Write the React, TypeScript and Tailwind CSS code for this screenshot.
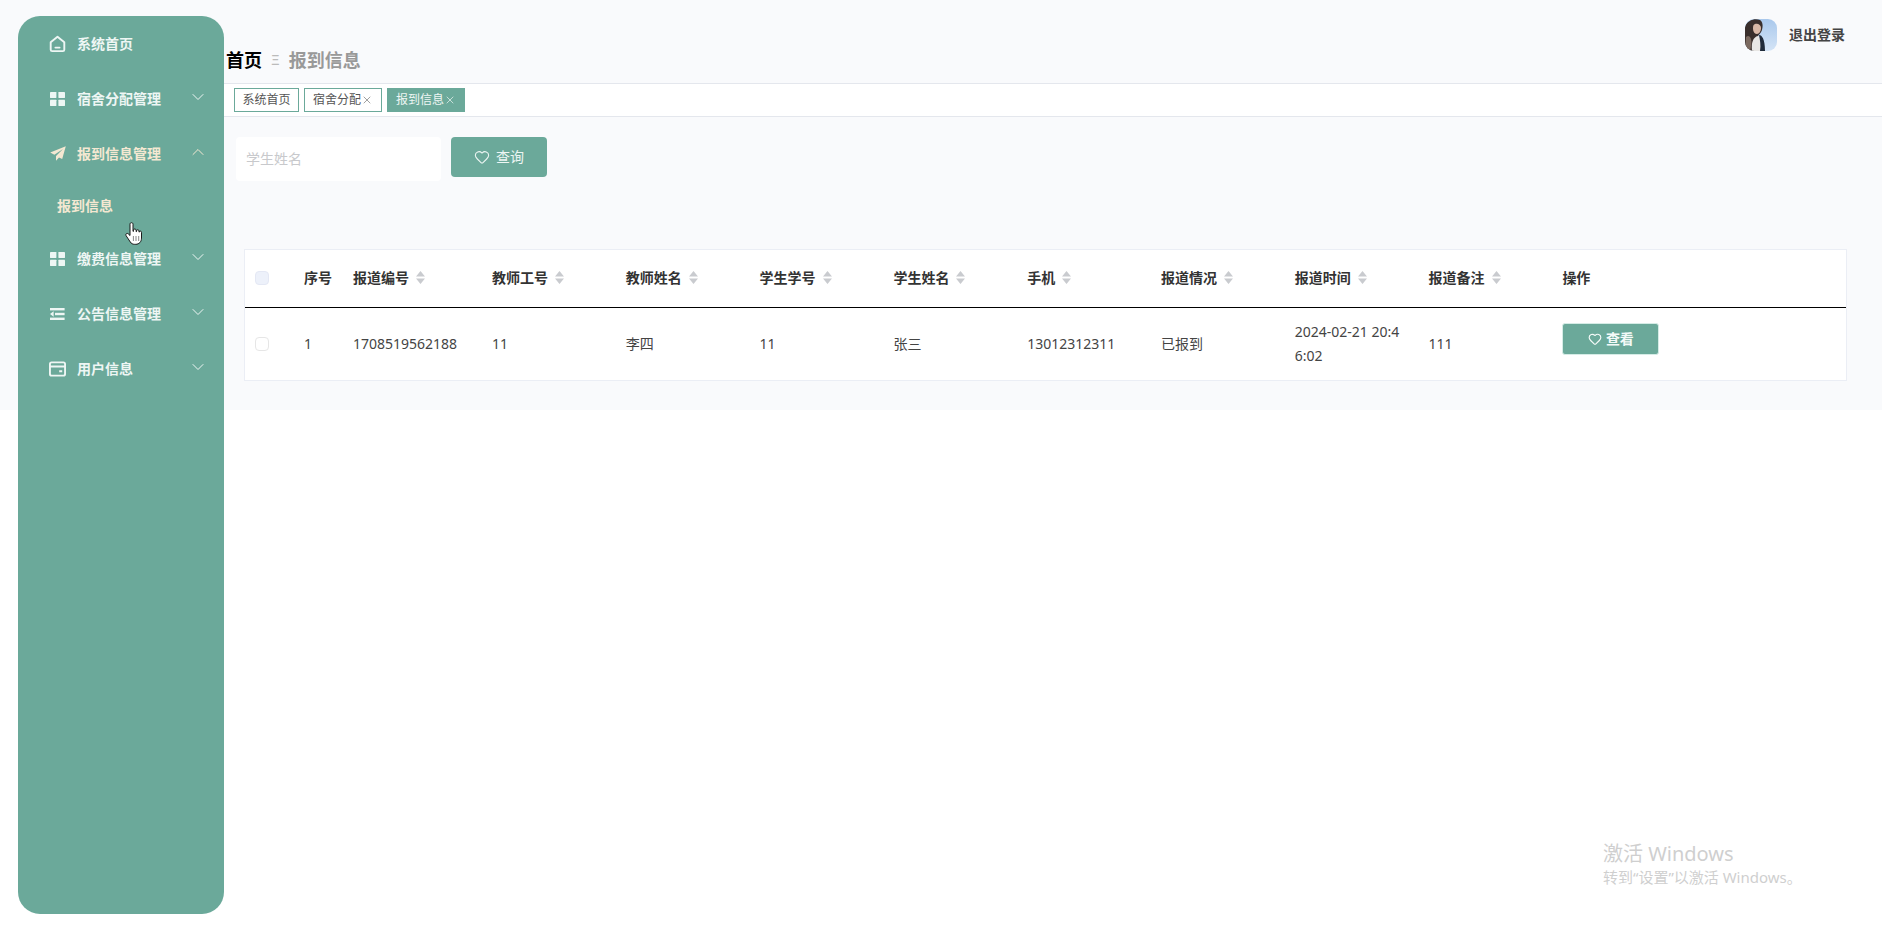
import { ChevronDown, ChevronUp, Heart, X } from "lucide-react";
import { FC, ReactNode } from "react";

const HomeIcon = () => (
  <svg width="18" height="18" viewBox="0 0 18 18" fill="none" stroke="currentColor" strokeWidth="2">
    <path d="M1.800 7.200 9 1.400l7.200 5.800V15a1.600 1.600 0 0 1-1.600 1.600H3.400A1.600 1.600 0 0 1 1.800 15z" strokeLinejoin="round" />
    <path d="M6.800 12.800h4.400" strokeLinecap="round" />
  </svg>
);

const GridIcon = () => (
  <svg width="15" height="14" viewBox="0 0 15 14" fill="currentColor">
    <rect x="0" y="0" width="6.400" height="6" rx=".4" />
    <rect x="8.400" y="0" width="6.600" height="6" rx=".4" />
    <rect x="0" y="7.800" width="6.400" height="6.200" rx=".4" />
    <rect x="8.400" y="7.800" width="6.600" height="6.200" rx=".4" />
  </svg>
);

const PlaneIcon = () => (
  <svg width="16" height="15" viewBox="0 0 16 15" fill="currentColor">
    <path d="M15.800.2.200 6.600l4.200 2.200L13 3 6 10v4.800l3-3.400 3.200 1.600z" />
  </svg>
);

const ListIcon = () => (
  <svg width="15" height="12" viewBox="0 0 15 12" fill="currentColor">
    <rect x="0" y="0" width="14.600" height="2.400" />
    <rect x="5" y="4.800" width="9.600" height="2.400" />
    <rect x="0" y="9.600" width="14.600" height="2.400" />
    <path d="M3.600 3.200v5.600L0 6z" />
  </svg>
);

const WalletIcon = () => (
  <svg width="18" height="16" viewBox="0 0 18 16" fill="none" stroke="currentColor" strokeWidth="2">
    <rect x="1" y="1" width="16" height="14" rx="1.800" />
    <path d="M1 5.400h16M10.800 10.400H14" />
  </svg>
);

const HandCursor = () => (
  <svg width="18" height="24" viewBox="0 0 18 24" className="absolute left-[125px] top-[222px]">
    <path
      d="M5 2.200c0-2 3-2 3 0v7.200l.5-.1V8.200c0-1.700 2.600-1.700 2.600 0v1.400h.4v-.7c0-1.600 2.500-1.600 2.500 0v1.200h.3c0-1.300 2.200-1.300 2.200.2v5.800c0 3.700-2.400 6.200-5.700 6.200H9.500c-2 0-3.200-.8-4.200-2.300L1.100 13.700c-1-1.600 1-3.100 2.200-1.800L5 13.500z"
      fill="#fff"
      stroke="#1a1a1a"
      strokeWidth="1"
      strokeLinejoin="round"
    />
    <path d="M8.400 14v5M11 14v5M13.700 14v5" stroke="#555" strokeWidth=".7" />
  </svg>
);

const Avatar = () => (
  <svg width="32" height="32" viewBox="0 0 32 32" className="rounded-[9px]">
    <defs>
      <linearGradient id="sky" x1="0" y1="0" x2="0" y2="1">
        <stop offset="0" stopColor="#a9c8ec" />
        <stop offset="1" stopColor="#d4e4f6" />
      </linearGradient>
    </defs>
    <rect width="32" height="32" fill="url(#sky)" />
    <path d="M0 32V8C2 1 10-1 15 1c3 2 3 6 2 10-1 3-3 4-4 6l1 15z" fill="#3a2f2c" />
    <path d="M10 5c3-1 6 1 6 4s-2 6-4 6-4-2-4-5 0-4 2-5z" fill="#d9b8a6" />
    <path d="M7 32c-1-8 1-14 6-15 3 1 4 7 3 15z" fill="#e8e6e4" />
    <path d="M14 16c3 0 6 4 6 16h-5c1-6 0-11-1-16z" fill="#1f2a3a" />
    <path d="M1 18c2-2 4-1 5 2s0 8-1 12H0z" fill="#7c6a60" />
  </svg>
);

const SortCaret = () => (
  <svg width="9" height="13" viewBox="0 0 9 13" fill="#c9cbcf">
    <path d="M4.500 0 9 5.400H0zM4.500 13 9 7.600H0z" />
  </svg>
);

type MenuItem = { label: string; icon: ReactNode; arrow?: "down" | "up"; active?: boolean };

const menuTop: MenuItem[] = [
  { label: "系统首页", icon: <HomeIcon /> },
  { label: "宿舍分配管理", icon: <GridIcon />, arrow: "down" },
  { label: "报到信息管理", icon: <PlaneIcon />, arrow: "up", active: true },
];

const menuBottom: MenuItem[] = [
  { label: "缴费信息管理", icon: <GridIcon />, arrow: "down" },
  { label: "公告信息管理", icon: <ListIcon />, arrow: "down" },
  { label: "用户信息", icon: <WalletIcon />, arrow: "down" },
];

const MenuRow: FC<{ item: MenuItem }> = ({ item }) => (
  <div className={`flex h-[55px] items-center pl-[31px] pr-4 ${item.active ? "text-[#f4e8d2]" : "text-[#eef6f4]"}`}>
    <span className="flex w-[17px] justify-center">{item.icon}</span>
    <span className="ml-[11px] text-sm font-bold">{item.label}</span>
    {item.arrow === "down" && <ChevronDown size={20} strokeWidth={1.2} className="mb-[3px] ml-auto" />}
    {item.arrow === "up" && <ChevronUp size={20} strokeWidth={1.2} className="mb-[3px] ml-auto" />}
  </div>
);

const columns = [
  { label: "序号" },
  { label: "报道编号", sort: true },
  { label: "教师工号", sort: true },
  { label: "教师姓名", sort: true },
  { label: "学生学号", sort: true },
  { label: "学生姓名", sort: true },
  { label: "手机", sort: true },
  { label: "报道情况", sort: true },
  { label: "报道时间", sort: true },
  { label: "报道备注", sort: true },
  { label: "操作" },
];

const row = ["1", "1708519562188", "11", "李四", "11", "张三", "13012312311", "已报到", "2024-02-21 20:46:02", "111"];

const gridCols = "grid grid-cols-[49px_49px_139px_repeat(8,133.8px)_1fr]";

const App: FC = () => {
  return (
    <div className="relative flex h-[931px] items-start overflow-hidden bg-[linear-gradient(#f9fafc_410px,#fff_410px)] font-['Noto_Sans','Noto_Sans_CJK_SC',sans-serif]">
      <aside className="ml-[18px] mt-4 h-[898px] w-[206px] shrink-0 rounded-[22px] bg-[#6ba99a]">
        {menuTop.map((item) => (
          <MenuRow key={item.label} item={item} />
        ))}
        <div className="flex h-[50px] items-center pl-[39px] text-sm font-bold text-[#f4e8d2]">报到信息</div>
        {menuBottom.map((item) => (
          <MenuRow key={item.label} item={item} />
        ))}
      </aside>

      <main className="min-w-0 flex-1">
        <header className="flex h-[83px] justify-between pl-[2px] pr-[37px]">
          <div className="flex items-center self-end pb-[9px] leading-6">
            <span className="text-lg font-bold text-black">首页</span>
            <span className="ml-[9px] text-sm text-[#bbb]">Ξ</span>
            <span className="ml-[9px] text-lg font-bold text-[#999]">报到信息</span>
          </div>
          <div className="mt-[19px] flex h-8 items-center gap-3">
            <Avatar />
            <span className="text-sm font-bold text-[#444]">退出登录</span>
          </div>
        </header>

        <div className="flex h-[34px] items-center gap-[5px] border-y border-[#e4e7ed] bg-white pl-[10px] text-xs text-[#555]">
          <div className="flex h-6 items-center border border-[#6ba99a] px-[7.5px]">系统首页</div>
          <div className="flex h-6 items-center border border-[#6ba99a] px-2">
            宿舍分配
            <X size={12} strokeWidth={1.4} className="text-[#777]" />
          </div>
          <div className="flex h-6 items-center border border-[#6ba99a] bg-[#6ba99a] px-2 text-[#eef6f4]">
            报到信息
            <X size={12} strokeWidth={1.4} />
          </div>
        </div>

        <div className="ml-3 mt-5 flex items-start">
          <input
            placeholder="学生姓名"
            className="h-11 w-[205px] rounded bg-white pb-[2px] pl-[10px] text-sm outline-none placeholder:text-[#c8c9cc]"
          />
          <button className="ml-[10px] flex h-10 w-24 items-center justify-center gap-[6px] rounded bg-[#6ba99a] pb-[1px] text-sm text-[#eef6f4]">
            <Heart size={16} strokeWidth={1.6} />
            查询
          </button>
        </div>

        <div className="ml-5 mt-[68px] w-[1603px] border border-[#ebeef5] bg-white text-sm">
          <div className={`${gridCols} h-[58px] items-center border-b border-black pb-[2px] font-bold text-[#333]`}>
            <div className="pl-[10px]">
              <div className="h-[14px] w-[14px] rounded-sm border border-[#e4e8f4] bg-[#edf1fa]" />
            </div>
            {columns.map((col) => (
              <div key={col.label} className="flex items-center gap-[7px] pl-[10px]">
                {col.label}
                {col.sort && <SortCaret />}
              </div>
            ))}
          </div>
          <div className={`${gridCols} h-[72px] items-center pb-[1px] leading-6 text-[#444]`}>
            <div className="pl-[10px]">
              <div className="h-[14px] w-[14px] rounded-sm border border-[#e6e6e6] bg-white" />
            </div>
            {row.map((value, i) => (
              <div key={i} className="break-all pl-[10px] pr-[10px]">
                {value}
              </div>
            ))}
            <div className="pl-[10px]">
              <button className="mb-[9px] flex h-8 w-[97px] items-center justify-center gap-1 rounded-[3px] border border-[#d5ece6] bg-[#6ba99a] font-bold text-[#f4faf8]">
                <Heart size={14} strokeWidth={2} />
                查看
              </button>
            </div>
          </div>
        </div>
      </main>

      <HandCursor />

      <div className="pointer-events-none absolute left-[1603px] top-[840px] text-[#cfcfcf]">
        <div className="text-xl leading-[27px]">激活 Windows</div>
        <div className="text-[15px] leading-5">转到“设置”以激活 Windows。</div>
      </div>
    </div>
  );
};

export default App;
